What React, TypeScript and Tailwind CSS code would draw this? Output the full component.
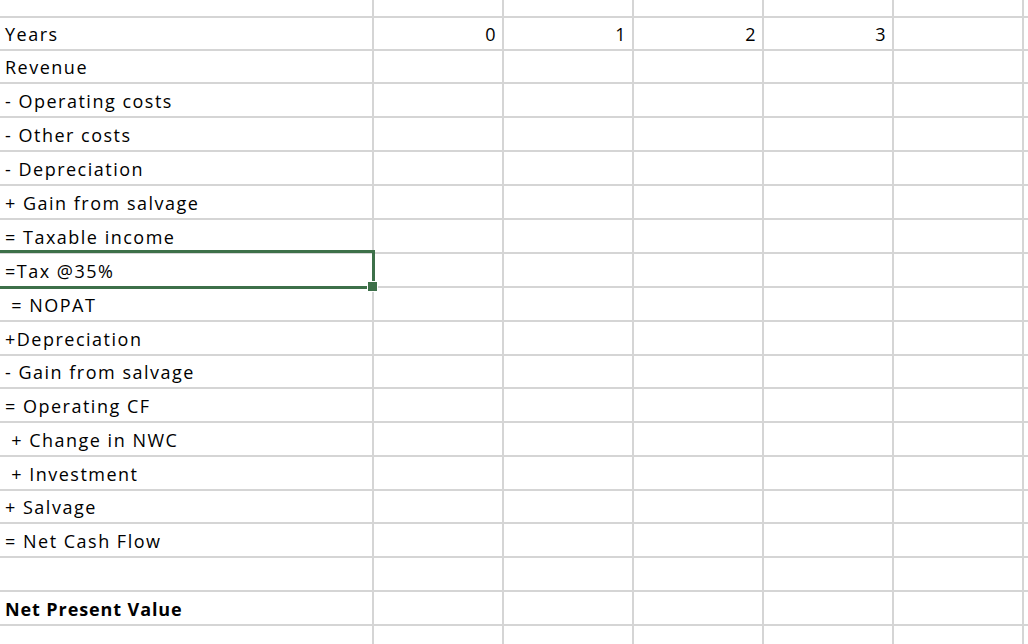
import React from 'react'

type Row = { label: string; bold?: boolean; values?: string[] }

const rows: Row[] = [
    { label: 'Years', values: ['0', '1', '2', '3'] },
    { label: 'Revenue' },
    { label: '- Operating costs' },
    { label: '- Other costs' },
    { label: '- Depreciation' },
    { label: '+ Gain from salvage' },
    { label: '= Taxable income' },
    { label: '=Tax @35%' },
    { label: ' = NOPAT' },
    { label: '+Depreciation' },
    { label: '- Gain from salvage' },
    { label: '= Operating CF' },
    { label: ' + Change in NWC' },
    { label: ' + Investment' },
    { label: '+ Salvage' },
    { label: '= Net Cash Flow' },
    { label: '' },
    { label: 'Net Present Value', bold: true },
]

const Cell = ({ children, right }: { children?: React.ReactNode; right?: boolean }) => (
    <div className={right ? 'bg-white flex items-center justify-end pr-[5px] pt-[2px] overflow-hidden' : 'bg-white flex items-center pt-[2px] overflow-hidden'}>
        {children}
    </div>
)

export default function App() {
    return (
        <div className="relative w-[1028px] h-[644px] overflow-hidden bg-white text-black text-[18px] tracking-[1.5px] font-['Open_Sans',sans-serif]">
            <div className="grid bg-[#d5d5d5] gap-[2px] grid-cols-[372px_128px_128px_128px_128px_128px_4px] grid-rows-[16px_31px_31px_32px_32px_32px_32px_32px_32px_32px_32px_31px_32px_32px_32px_31px_32px_32px_32px_30px]">
                {/* partial row above the table */}
                {Array.from({ length: 7 }).map((_, i) => <Cell key={`top-${i}`} />)}

                {rows.map((row, r) => (
                    <React.Fragment key={r}>
                        <Cell>
                            <span className={row.bold ? 'pl-[5px] whitespace-pre font-bold tracking-[0.9px]' : 'pl-[5px] whitespace-pre'}>{row.label}</span>
                        </Cell>
                        {[0, 1, 2, 3].map((c) => (
                            <Cell key={c} right>{row.values?.[c]}</Cell>
                        ))}
                        <Cell />
                        <Cell />
                    </React.Fragment>
                ))}

                {/* partial row at the bottom */}
                {Array.from({ length: 7 }).map((_, i) => <Cell key={`bot-${i}`} />)}
            </div>

            {/* selected cell A8 */}
            <div className="absolute left-[-3px] top-[250px] w-[378px] h-[39px] border-[3px] border-[#3d7049]" />
            <div className="absolute left-[367px] top-[281px] w-[11px] h-[11px] bg-[#3d7049] border border-white" />
        </div>
    )
}
